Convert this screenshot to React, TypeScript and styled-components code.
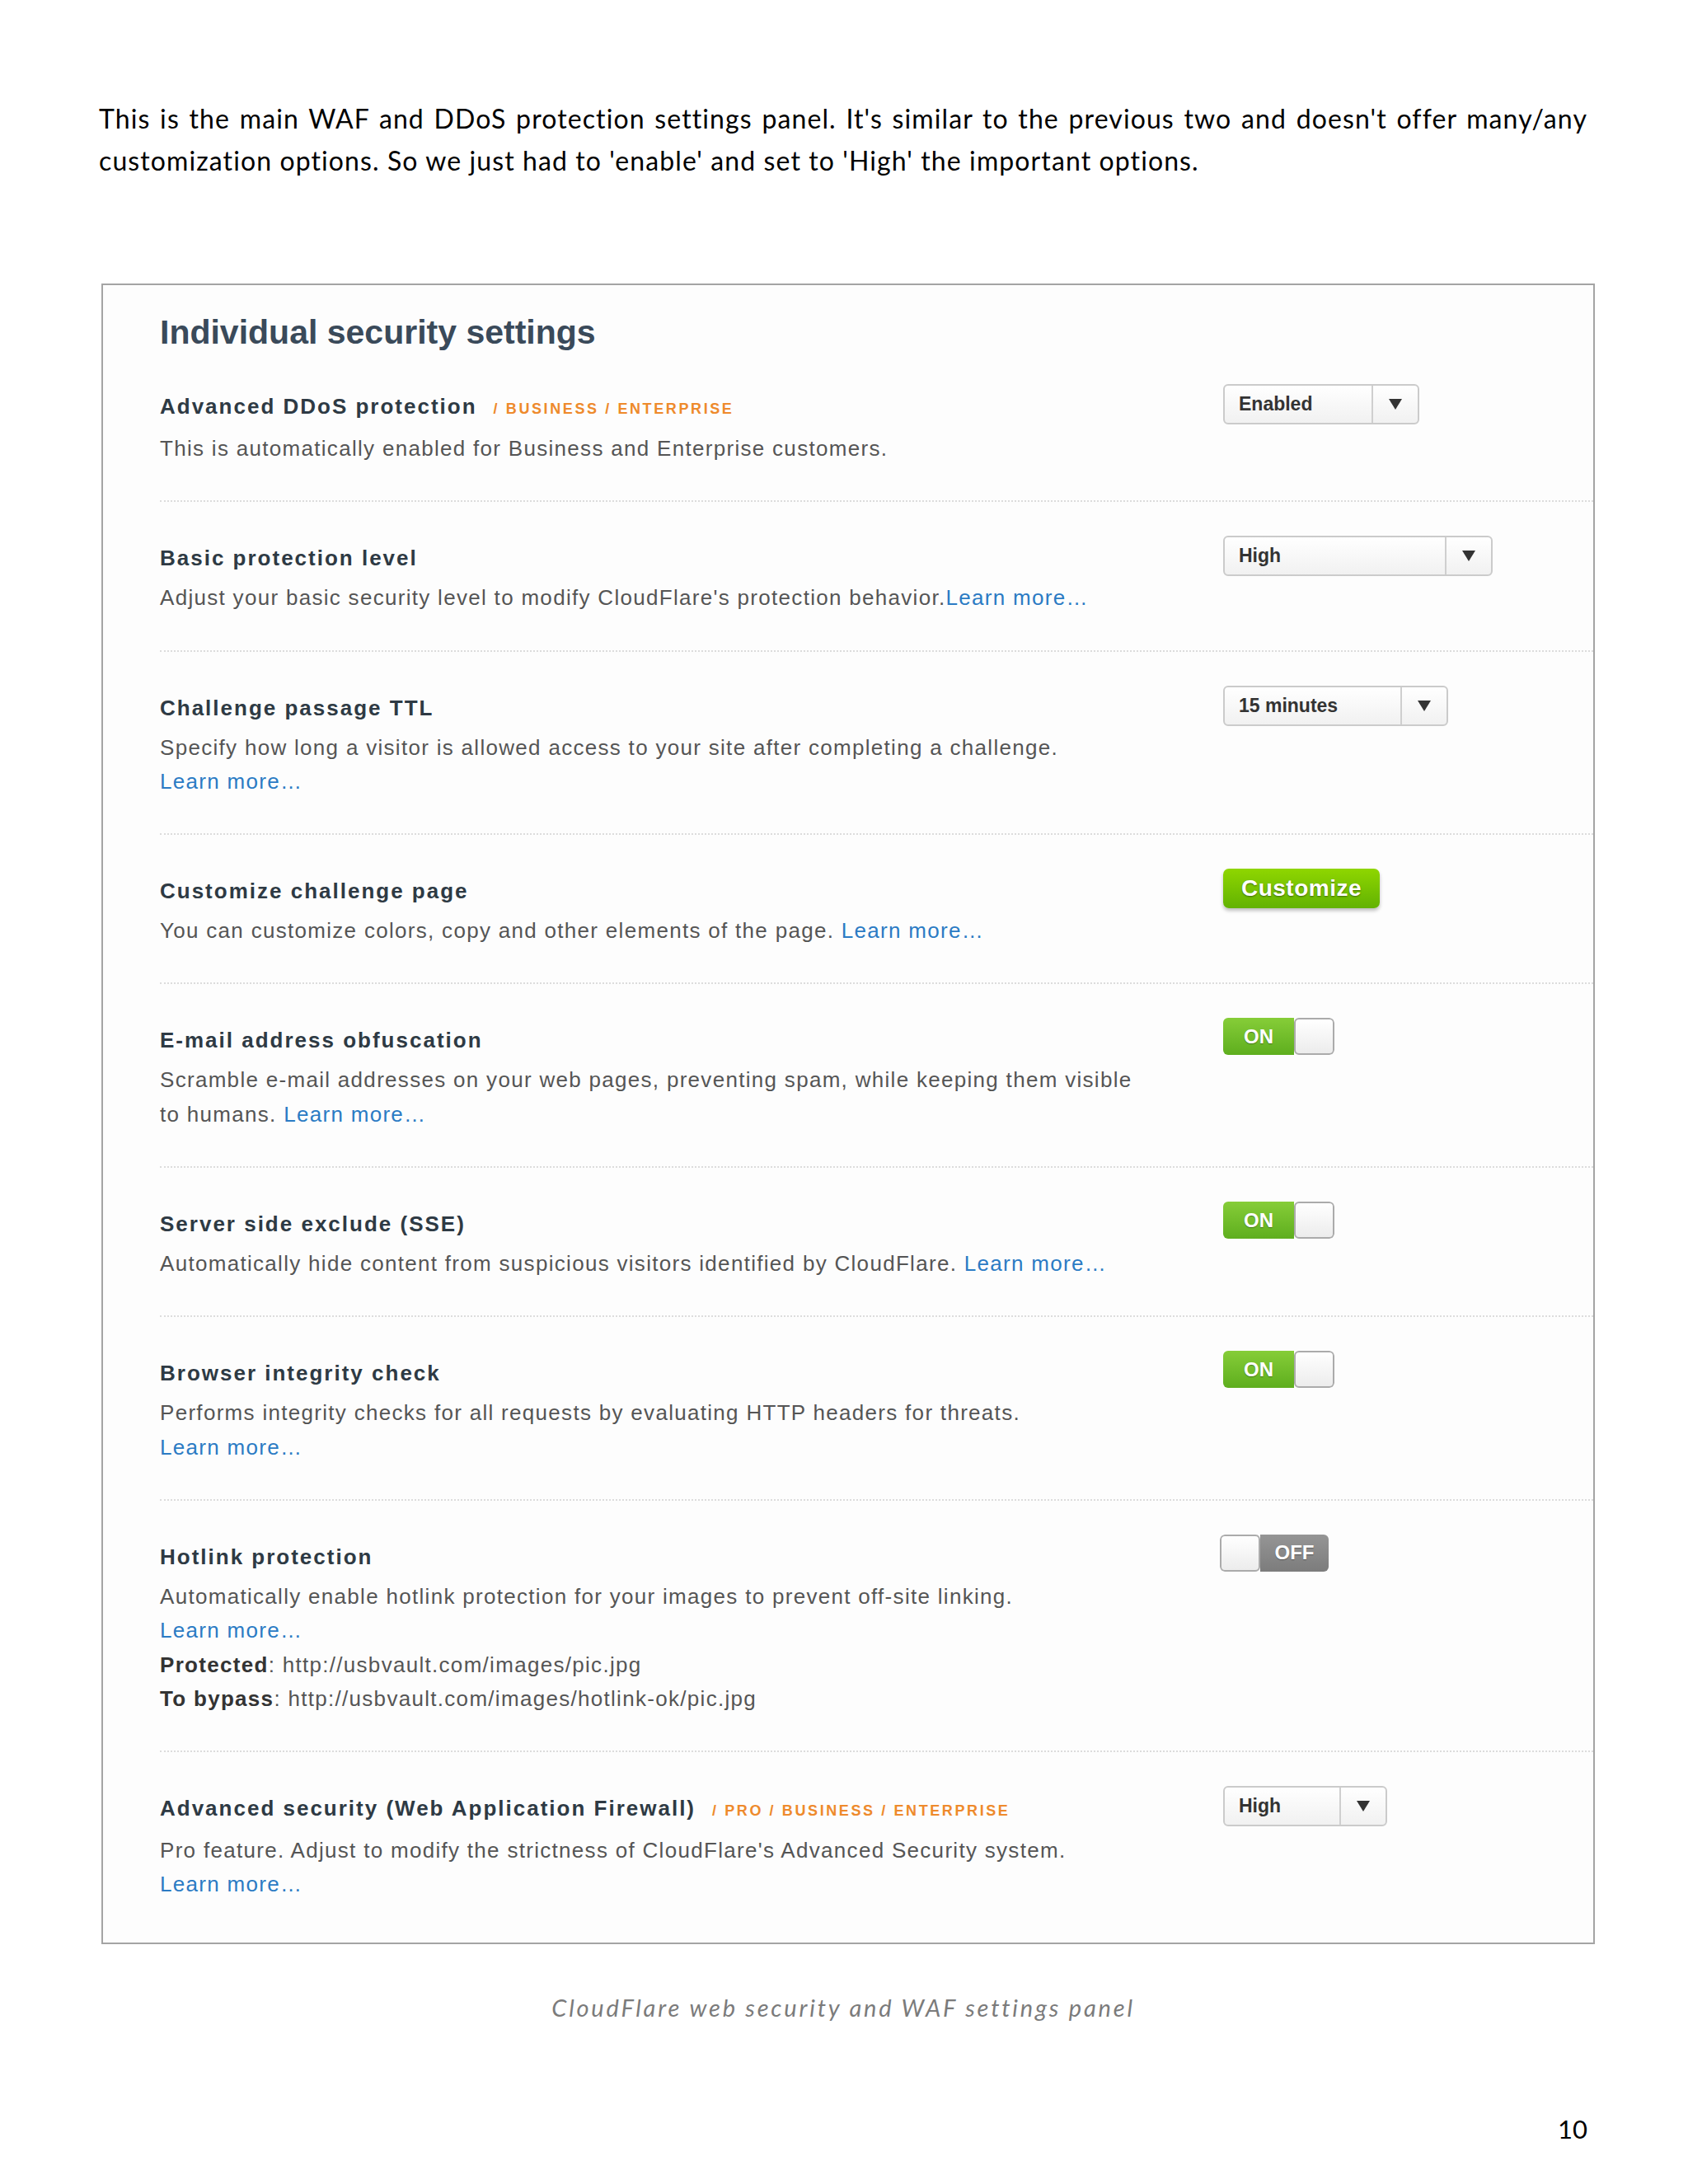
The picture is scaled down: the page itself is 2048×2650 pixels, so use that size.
import React from 'react';
import styled, { createGlobalStyle } from 'styled-components';

const GlobalStyle = createGlobalStyle`
  html, body {
    margin: 0;
    padding: 0;
    background: #ffffff;
  }
`;

const Page = styled.div`
  width: 2048px;
  height: 2650px;
  box-sizing: border-box;
  padding: 118px 122px 0 120px;
  display: flex;
  flex-direction: column;
  font-family: Lato, "Liberation Sans", sans-serif;
  color: #000;
`;

const Intro = styled.p`
  margin: 0;
  font-size: 32px;
  line-height: 51px;
  letter-spacing: 1.1px;
  text-align: justify;
`;

const Panel = styled.section`
  margin: 124px 0 0 3px;
  width: 1812px;
  box-sizing: border-box;
  border: 2px solid #a4a4a4;
  background: #fdfdfd;
  padding: 35px 0 7px 69px;
  font-family: "Liberation Sans", Arial, sans-serif;
`;

const Heading = styled.h2`
  margin: 0;
  font-size: 41px;
  line-height: 44px;
  font-weight: 700;
  color: #3a4a5a;
`;

const Row = styled.div<{ $last?: boolean }>`
  display: grid;
  grid-template-columns: 1290px 1fr;
  padding: 48px 0 42px;
  border-bottom: ${(p) => (p.$last ? 'none' : '2px dotted #dcdcdc')};
`;

const TextCol = styled.div`
  display: flex;
  flex-direction: column;
`;

const Title = styled.div`
  font-size: 26px;
  line-height: 40px;
  font-weight: 700;
  letter-spacing: 2px;
  color: #2e3a44;
  margin-bottom: 8px;
`;

const Plans = styled.span`
  margin-left: 20px;
  font-size: 18px;
  letter-spacing: 2.6px;
  color: #ee8a2c;
`;

const Desc = styled.div`
  max-width: 1200px;
  font-size: 26px;
  line-height: 41.3px;
  letter-spacing: 1.3px;
  color: #555;
`;

const Strong = styled.b`
  color: #333;
`;

const Link = styled.a<{ $block?: boolean }>`
  display: ${(p) => (p.$block ? 'block' : 'inline')};
  color: #2b7bc4;
  text-decoration: none;
`;

const ControlCol = styled.div<{ $shift?: number }>`
  margin-top: -7px;
  margin-left: ${(p) => p.$shift ?? 0}px;
  align-self: start;
`;

const Select = styled.div<{ $width: number }>`
  width: ${(p) => p.$width}px;
  height: 49px;
  box-sizing: border-box;
  display: flex;
  border: 2px solid #cbcbcb;
  border-radius: 6px;
  background: linear-gradient(#ffffff, #f1f1f1);
  font-size: 23px;
  font-weight: 700;
  color: #333;
`;

const SelectValue = styled.div`
  flex: 1;
  display: flex;
  align-items: center;
  padding-left: 17px;
`;

const SelectArrow = styled.div`
  width: 54px;
  border-left: 2px solid #cfcfcf;
  display: flex;
  align-items: center;
  justify-content: center;
`;

const GreenButton = styled.button`
  width: 190px;
  height: 48px;
  border: none;
  border-radius: 7px;
  background: linear-gradient(#8fd600, #62b202);
  box-shadow: 0 3px 4px rgba(0, 0, 0, 0.25);
  color: #fff;
  font-family: "Liberation Sans", Arial, sans-serif;
  font-size: 28px;
  font-weight: 700;
  letter-spacing: 0.5px;
  text-shadow: 0 1px 2px rgba(0, 0, 0, 0.45);
  padding: 0;
`;

const Toggle = styled.div<{ $on: boolean }>`
  display: flex;
  flex-direction: ${(p) => (p.$on ? 'row' : 'row-reverse')};
  width: ${(p) => (p.$on ? 135 : 132)}px;
  height: 45px;
  border-radius: 6px;
  overflow: hidden;
`;

const ToggleFace = styled.div<{ $on: boolean }>`
  flex: 1;
  display: flex;
  align-items: center;
  justify-content: center;
  background: ${(p) =>
    p.$on ? 'linear-gradient(#86cd38, #5eae1e)' : 'linear-gradient(#959595, #7c7c7c)'};
  color: #fff;
  font-size: 24px;
  font-weight: 700;
  text-shadow: 0 1px 1px rgba(0, 0, 0, 0.35);
`;

const Knob = styled.div`
  width: 49px;
  box-sizing: border-box;
  border: 2px solid #ababab;
  border-radius: 6px;
  background: linear-gradient(#ffffff, #ececec);
`;

const Caption = styled.div`
  margin-top: 57px;
  text-align: center;
  font-style: italic;
  font-size: 29px;
  line-height: 40px;
  letter-spacing: 2.8px;
  color: #7b7b7b;
`;

const PageNumber = styled.div`
  margin-top: 107px;
  text-align: right;
  font-size: 31px;
  line-height: 40px;
`;

const Arrow = () => (
  <svg width="18" height="15" viewBox="0 0 18 15">
    <path d="M1 1 H17 L9 14 Z" fill="#333" />
  </svg>
);

const Dropdown: React.FC<{ value: string; width: number }> = ({ value, width }) => (
  <Select $width={width}>
    <SelectValue>{value}</SelectValue>
    <SelectArrow>
      <Arrow />
    </SelectArrow>
  </Select>
);

const Switch: React.FC<{ on: boolean }> = ({ on }) => (
  <Toggle $on={on}>
    <ToggleFace $on={on}>{on ? 'ON' : 'OFF'}</ToggleFace>
    <Knob />
  </Toggle>
);

const more = 'Learn more…';

export default function App() {
  return (
    <>
      <GlobalStyle />
      <Page>
        <Intro>
          This is the main WAF and DDoS protection settings panel. It's similar to the previous two and
          doesn't offer many/any customization options. So we just had to 'enable' and set to 'High' the
          important options.
        </Intro>

        <Panel>
          <Heading>Individual security settings</Heading>

          <Row>
            <TextCol>
              <Title>
                Advanced DDoS protection<Plans>/ BUSINESS / ENTERPRISE</Plans>
              </Title>
              <Desc>This is automatically enabled for Business and Enterprise customers.</Desc>
            </TextCol>
            <ControlCol>
              <Dropdown value="Enabled" width={238} />
            </ControlCol>
          </Row>

          <Row>
            <TextCol>
              <Title>Basic protection level</Title>
              <Desc>
                Adjust your basic security level to modify CloudFlare's protection behavior.
                <Link href="#">{more}</Link>
              </Desc>
            </TextCol>
            <ControlCol>
              <Dropdown value="High" width={327} />
            </ControlCol>
          </Row>

          <Row>
            <TextCol>
              <Title>Challenge passage TTL</Title>
              <Desc>
                Specify how long a visitor is allowed access to your site after completing a challenge.
                <Link href="#" $block>{more}</Link>
              </Desc>
            </TextCol>
            <ControlCol>
              <Dropdown value="15 minutes" width={273} />
            </ControlCol>
          </Row>

          <Row>
            <TextCol>
              <Title>Customize challenge page</Title>
              <Desc>
                You can customize colors, copy and other elements of the page. <Link href="#">{more}</Link>
              </Desc>
            </TextCol>
            <ControlCol>
              <GreenButton>Customize</GreenButton>
            </ControlCol>
          </Row>

          <Row>
            <TextCol>
              <Title>E-mail address obfuscation</Title>
              <Desc>
                Scramble e-mail addresses on your web pages, preventing spam, while keeping them visible
                <br />
                to humans. <Link href="#">{more}</Link>
              </Desc>
            </TextCol>
            <ControlCol>
              <Switch on />
            </ControlCol>
          </Row>

          <Row>
            <TextCol>
              <Title>Server side exclude (SSE)</Title>
              <Desc>
                Automatically hide content from suspicious visitors identified by CloudFlare.{' '}
                <Link href="#">{more}</Link>
              </Desc>
            </TextCol>
            <ControlCol>
              <Switch on />
            </ControlCol>
          </Row>

          <Row>
            <TextCol>
              <Title>Browser integrity check</Title>
              <Desc>
                Performs integrity checks for all requests by evaluating HTTP headers for threats.
                <Link href="#" $block>{more}</Link>
              </Desc>
            </TextCol>
            <ControlCol>
              <Switch on />
            </ControlCol>
          </Row>

          <Row>
            <TextCol>
              <Title>Hotlink protection</Title>
              <Desc>
                Automatically enable hotlink protection for your images to prevent off-site linking.
                <Link href="#" $block>{more}</Link>
                <div>
                  <Strong>Protected</Strong>: http://usbvault.com/images/pic.jpg
                </div>
                <div>
                  <Strong>To bypass</Strong>: http://usbvault.com/images/hotlink-ok/pic.jpg
                </div>
              </Desc>
            </TextCol>
            <ControlCol $shift={-4}>
              <Switch on={false} />
            </ControlCol>
          </Row>

          <Row $last>
            <TextCol>
              <Title>
                Advanced security (Web Application Firewall)<Plans>/ PRO / BUSINESS / ENTERPRISE</Plans>
              </Title>
              <Desc>
                Pro feature. Adjust to modify the strictness of CloudFlare's Advanced Security system.
                <Link href="#" $block>{more}</Link>
              </Desc>
            </TextCol>
            <ControlCol>
              <Dropdown value="High" width={199} />
            </ControlCol>
          </Row>
        </Panel>

        <Caption>CloudFlare web security and WAF settings panel</Caption>
        <PageNumber>10</PageNumber>
      </Page>
    </>
  );
}
